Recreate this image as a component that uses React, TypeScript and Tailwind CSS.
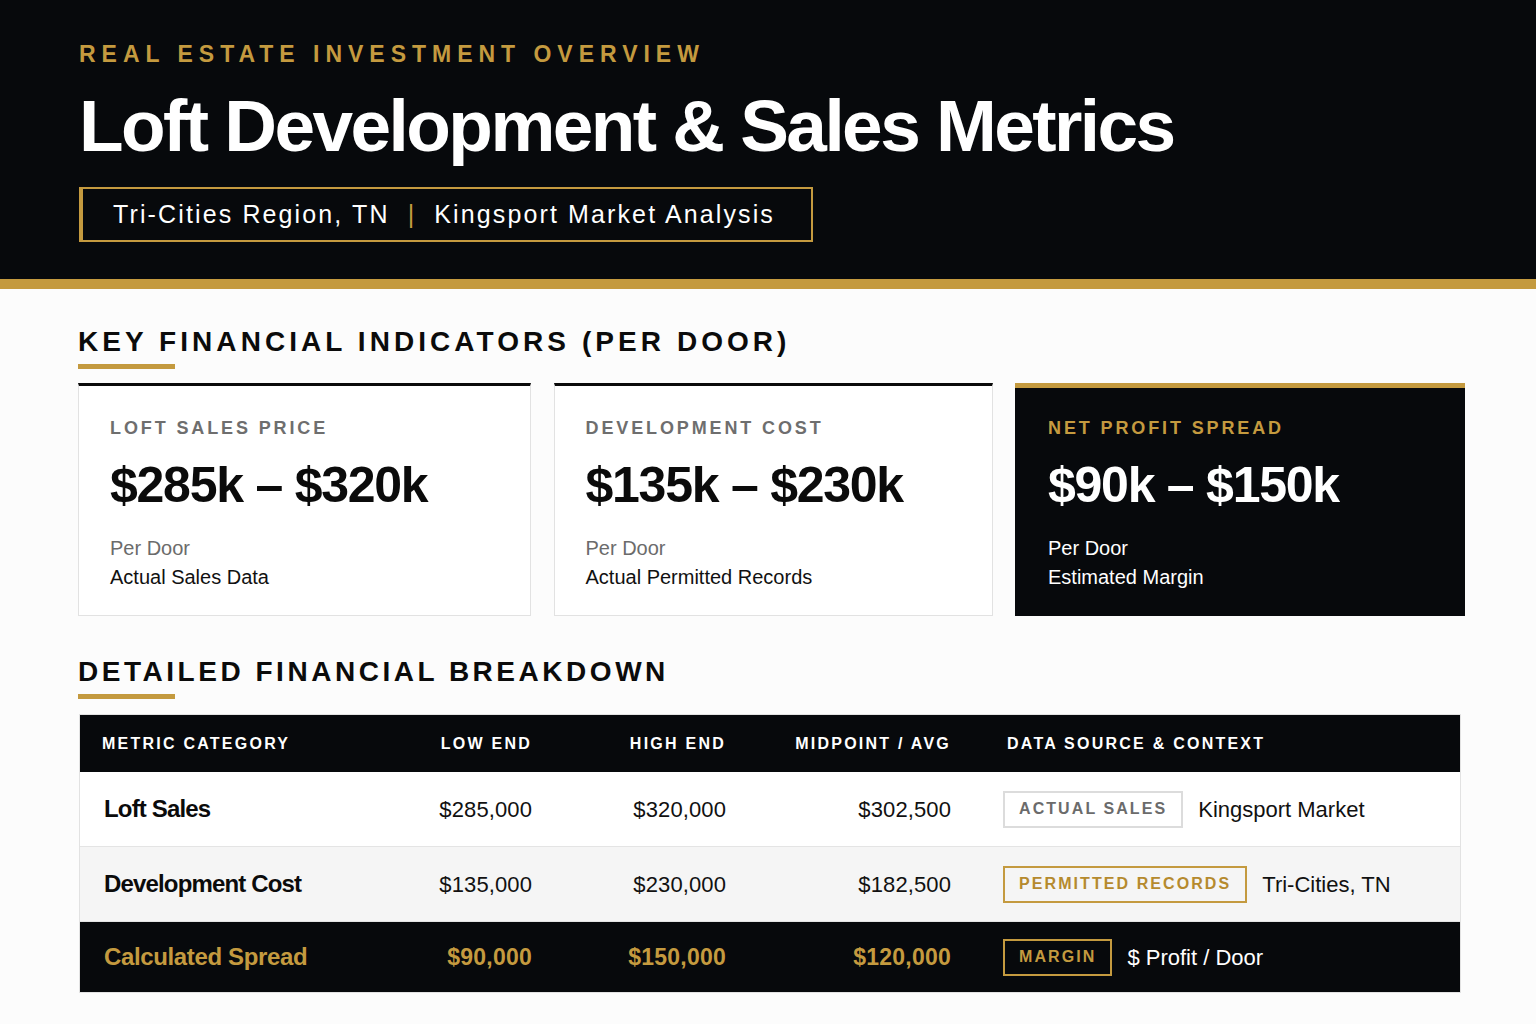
const sans = "font-['Liberation_Sans',Arial,sans-serif]"
const cols = "grid grid-cols-[276px_200px_194px_225px_1fr] items-center"

interface CardProps {
    label: string
    value: string
    sub: string
    note: string
    dark?: boolean
}

const MetricCard = ({ label, value, sub, note, dark }: CardProps) => {
    return (
        <div
            className={
                dark
                    ? "h-[233px] bg-[#07090c] border-t-[5px] border-[#c49a3f] pl-[33px] pt-[31px]"
                    : "h-[233px] bg-white border border-[#e2e2e2] border-t-[3px] border-t-[#0a0a0a] pl-[31px] pt-[33px]"
            }
        >
            <p className={`${sans} text-[18px] leading-none font-bold tracking-[0.16em] ${dark ? "text-[#c49a3f]" : "text-[#6e6e6e]"}`}>{label}</p>
            <p className={`${sans} mt-[23px] text-[50px] leading-none font-bold tracking-[-0.025em] ${dark ? "text-white" : "text-[#0b0b0b]"}`}>{value}</p>
            <div className={`${sans} mt-[24px] text-[20px] leading-[29px]`}>
                <p className={dark ? "text-white" : "text-[#6b6b6b]"}>{sub}</p>
                <p className={dark ? "text-white" : "text-[#111]"}>{note}</p>
            </div>
        </div>
    )
}

const SectionTitle = ({ children, tight }: { children: string; tight?: boolean }) => (
    <div>
        <h2 className={`${sans} text-[28px] leading-none font-bold text-[#0b0b0b] ${tight ? "tracking-[0.126em]" : "tracking-[0.145em]"}`}>{children}</h2>
        <div className="mt-[8px] h-[5px] w-[97px] bg-[#c49a3f]" />
    </div>
)

const rows = [
    { name: "Loft Sales", low: "$285,000", high: "$320,000", mid: "$302,500", badge: "ACTUAL SALES", ctx: "Kingsport Market", kind: "plain" },
    { name: "Development Cost", low: "$135,000", high: "$230,000", mid: "$182,500", badge: "PERMITTED RECORDS", ctx: "Tri-Cities, TN", kind: "gold" },
    { name: "Calculated Spread", low: "$90,000", high: "$150,000", mid: "$120,000", badge: "MARGIN", ctx: "$ Profit / Door", kind: "dark" },
]

export default function App() {
    return (
        <div className={`${sans} min-h-screen bg-[#fcfcfc]`}>
            {/* Header */}
            <header className="bg-[#07090c] pl-[79px] pt-[43px] pb-[37px]">
                <p className="text-[23px] leading-none font-bold tracking-[0.26em] text-[#c49a3f]">REAL ESTATE INVESTMENT OVERVIEW</p>
                <h1 className="mt-[23px] text-[73px] leading-none font-bold tracking-[-0.035em] text-white">Loft Development &amp; Sales Metrics</h1>
                <div className="mt-[25px] inline-flex h-[55px] items-center border-2 border-l-4 border-[#c49a3f] pl-[30px] pr-[36px] text-[25px] tracking-[0.085em] text-white">
                    <span>Tri-Cities Region, TN</span>
                    <span className="mx-[18px] text-[#c49a3f]">|</span>
                    <span>Kingsport Market Analysis</span>
                </div>
            </header>
            <div className="h-[10px] bg-[#c49a3f]" />

            <main className="pl-[78px] pr-[71px] pt-[39px] pb-[30px]">
                <SectionTitle>KEY FINANCIAL INDICATORS (PER DOOR)</SectionTitle>

                <div className="mt-[14px] grid grid-cols-[453px_439px_450px] gap-x-[22.5px]">
                    <MetricCard label="LOFT SALES PRICE" value="$285k – $320k" sub="Per Door" note="Actual Sales Data" />
                    <MetricCard label="DEVELOPMENT COST" value="$135k – $230k" sub="Per Door" note="Actual Permitted Records" />
                    <MetricCard label="NET PROFIT SPREAD" value="$90k – $150k" sub="Per Door" note="Estimated Margin" dark />
                </div>

                <div className="mt-[42px]">
                    <SectionTitle tight>DETAILED FINANCIAL BREAKDOWN</SectionTitle>
                </div>

                {/* Table */}
                <div className="mt-[15px] mr-[4px] ml-[1px] border border-[#e2e2e2]">
                    <div className={`${cols} h-[57px] bg-[#07090c] text-[16px] font-bold tracking-[0.14em] text-white`}>
                        <span className="pl-[22px]">METRIC CATEGORY</span>
                        <span className="pr-[24px] text-right">LOW END</span>
                        <span className="pr-[24px] text-right">HIGH END</span>
                        <span className="pr-[24px] text-right">MIDPOINT / AVG</span>
                        <span className="pl-[32px]">DATA SOURCE &amp; CONTEXT</span>
                    </div>
                    {rows.map((r, i) => {
                        const dark = r.kind === "dark"
                        const rowBg = dark ? "bg-[#07090c] h-[70px]" : i === 1 ? "bg-[#f5f5f5] h-[75px] border-b border-[#e4e4e4]" : "bg-white h-[75px] border-b border-[#e4e4e4]"
                        const valCls = dark ? "text-[23px] font-bold text-[#c49a3f] tracking-[0.01em]" : "text-[#111] tracking-[0.005em]"
                        const badgeCls =
                            r.kind === "plain"
                                ? "border-[#dcdcdc] text-[#6b6b6b] bg-white"
                                : dark
                                  ? "border-[#c49a3f] text-[#c49a3f]"
                                  : "border-[#c49a3f] text-[#b58a2e]"
                        return (
                            <div key={r.name} className={`${cols} ${rowBg} text-[22px]`}>
                                <span className={`pl-[24px] text-[24px] font-bold ${dark ? "text-[#c49a3f] tracking-[-0.015em]" : "text-[#0b0b0b] tracking-[-0.035em]"}`}>{r.name}</span>
                                <span className={`pr-[24px] text-right ${valCls}`}>{r.low}</span>
                                <span className={`pr-[24px] text-right ${valCls}`}>{r.high}</span>
                                <span className={`pr-[24px] text-right ${valCls}`}>{r.mid}</span>
                                <div className="flex items-center gap-x-[15px] pl-[28px]">
                                    <span className={`flex h-[37px] items-center border-2 px-[14px] text-[16px] font-bold tracking-[0.13em] ${badgeCls}`}>{r.badge}</span>
                                    <span className={dark ? "text-white" : "text-[#111]"}>{r.ctx}</span>
                                </div>
                            </div>
                        )
                    })}
                </div>
            </main>
        </div>
    )
}
